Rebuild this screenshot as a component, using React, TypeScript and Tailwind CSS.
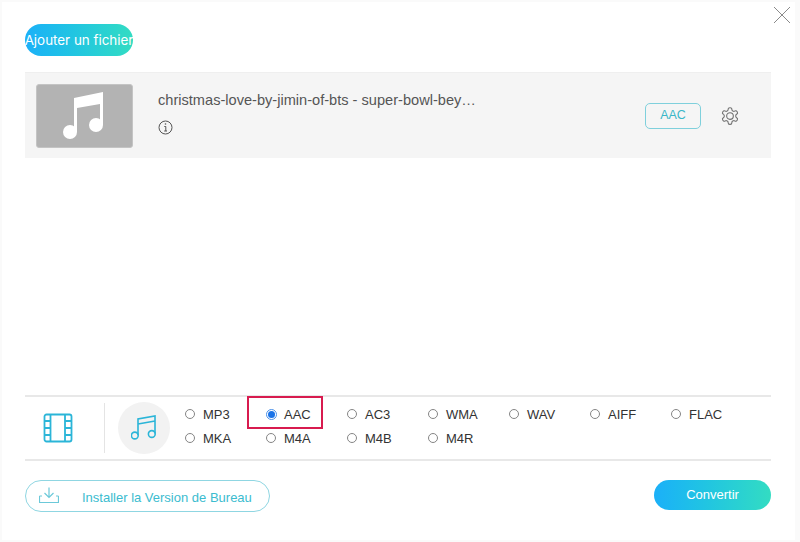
import React from 'react';

const row1 = ['MP3', 'AAC', 'AC3', 'WMA', 'WAV', 'AIFF', 'FLAC'];
const row2 = ['MKA', 'M4A', 'M4B', 'M4R'];

const FormatRadio: React.FC<{ label: string; checked?: boolean }> = ({ label, checked }) => (
  <div className="flex h-6 w-[81px] items-center">
    {checked ? (
      <span className="flex h-[11px] w-[11px] items-center justify-center rounded-full border border-[#4a90e8] bg-white">
        <span className="h-[7px] w-[7px] rounded-full bg-[#1a73e8]" />
      </span>
    ) : (
      <span className="h-[10px] w-[10px] rounded-full border border-[#858585] bg-white" />
    )}
    <span className={`mt-px text-[13px] text-[#333] ${checked ? 'ml-[7px]' : 'ml-[8px]'}`}>{label}</span>
  </div>
);

export default function App() {
  return (
    <div
      className="flex h-[542px] w-[800px] flex-col overflow-hidden border-t-2 border-r-[5px] border-b-2 border-l-2 border-[#fafafa] bg-white pl-[23px] pr-6"
      style={{ fontFamily: '"Liberation Sans", Arial, sans-serif' }}
    >
      <div className="flex h-[70px] items-start justify-between pt-[22px]">
        <button className="flex h-8 w-[108px] items-center justify-center whitespace-nowrap rounded-full bg-gradient-to-r from-[#1cb0f8] to-[#33dcc2] text-[13.400px] text-white" style={{ fontFamily: 'Inter, sans-serif' }}>
          Ajouter un fichier
        </button>
        <button className="-mr-[21px] -mt-[19px] text-[#8a8a8a]">
          <svg width="20" height="20" viewBox="0 0 20 20" fill="none" stroke="currentColor" strokeWidth="1">
            <path d="M2 2 L18 18 M18 2 L2 18" />
          </svg>
        </button>
      </div>

      <div className="flex h-[86px] w-[746px] items-center border-t border-[#efefef] bg-[#f5f5f5] pl-[11px]">
        <div className="flex h-16 w-[97px] items-center justify-center rounded-[3px] border border-[#c4c4c4] bg-[#b3b3b3]">
          <svg className="mr-[3px]" width="41" height="47" viewBox="0 0 41 47" fill="white">
            <path d="M11 6 L40 0 V33 H37 V12 L14 16 V40 H11 Z" />
            <circle cx="7" cy="40" r="7" />
            <circle cx="33" cy="33" r="7" />
          </svg>
        </div>
        <div className="ml-[25px] flex h-16 flex-1 flex-col pt-2">
          <div className="text-[14.600px] leading-4 text-[#555]">christmas-love-by-jimin-of-bts - super-bowl-bey…</div>
          <svg className="mt-[12px]" width="15" height="15" viewBox="0 0 15 15" fill="none" stroke="#555" strokeWidth="1">
            <circle cx="7.500" cy="7.500" r="6.500" />
            <path d="M6.300 6.500 H7.800 V11 M6.200 11 H9" />
            <circle cx="7.500" cy="4" r="0.800" fill="#555" stroke="none" />
          </svg>
        </div>
        <button className="h-[26px] w-[56px] rounded-[5px] border border-[#7fd0dc] text-[12.500px] text-[#3ab7c8]">AAC</button>
        <svg className="ml-[19px] mr-[31px]" width="20" height="20" viewBox="0 0 24 24" fill="none" stroke="#707070" strokeWidth="1.300" strokeLinecap="round" strokeLinejoin="round">
          <path d="M12.220 2h-.44a2 2 0 0 0-2 2v.18a2 2 0 0 1-1 1.730l-.43.25a2 2 0 0 1-2 0l-.15-.08a2 2 0 0 0-2.730.73l-.22.38a2 2 0 0 0 .73 2.730l.15.1a2 2 0 0 1 1 1.720v.51a2 2 0 0 1-1 1.740l-.15.09a2 2 0 0 0-.73 2.730l.22.38a2 2 0 0 0 2.730.73l.15-.08a2 2 0 0 1 2 0l.43.25a2 2 0 0 1 1 1.730V20a2 2 0 0 0 2 2h.44a2 2 0 0 0 2-2v-.18a2 2 0 0 1 1-1.730l.43-.25a2 2 0 0 1 2 0l.15.08a2 2 0 0 0 2.730-.73l.22-.39a2 2 0 0 0-.73-2.730l-.15-.08a2 2 0 0 1-1-1.740v-.5a2 2 0 0 1 1-1.740l.15-.09a2 2 0 0 0 .73-2.730l-.22-.38a2 2 0 0 0-2.730-.73l-.15.08a2 2 0 0 1-2 0l-.43-.25a2 2 0 0 1-1-1.730V4a2 2 0 0 0-2-2z" />
          <circle cx="12" cy="12" r="4" />
        </svg>
      </div>

      <div className="mt-[237px] flex h-[66px] w-[746px] items-center border-y-2 border-[#e8e8e8]">
        <div className="flex w-[79px] items-center pl-[18px]">
          <svg width="30" height="30" viewBox="0 0 30 30" fill="none" stroke="#2bb5d8" strokeWidth="1.800" strokeLinejoin="round">
            <rect x="1.500" y="1.500" width="27" height="27" rx="2" />
            <path d="M7.500 1.500 V28.500 M22 1.500 V28.500 M1.500 8 H7.500 M1.500 15 H7.500 M1.500 22 H7.500 M22 8 H28.500 M22 15 H28.500 M22 22 H28.500" />
          </svg>
        </div>
        <div className="h-[50px] w-px bg-[#e4e4e4]" />
        <div className="ml-[13px] flex h-[52px] w-[52px] items-center justify-center rounded-full bg-[#f2f2f2]">
          <svg width="26" height="28" viewBox="0 0 26 28" fill="none" stroke="#2bb5d8" strokeWidth="1.600">
            <path d="M7 21 V5 L24 2 V19.500 M7 10 L24 7" />
            <circle cx="3.800" cy="21.500" r="3.400" />
            <circle cx="20.800" cy="20" r="3.400" />
          </svg>
        </div>
        <div className="relative ml-[15px] -mt-[4px] flex flex-col">
          <div className="flex">
            {row1.map((f) => (
              <FormatRadio key={f} label={f} checked={f === 'AAC'} />
            ))}
          </div>
          <div className="flex">
            {row2.map((f) => (
              <FormatRadio key={f} label={f} />
            ))}
          </div>
          <div className="absolute -top-[6px] left-[62px] h-[33px] w-[76px] border-2 border-[#d81b4f]" />
        </div>
      </div>

      <div className="mt-[19px] flex w-[746px] items-start justify-between">
        <button className="flex h-8 w-[245px] items-center rounded-full border border-[#8fd6e2] pl-[13px] text-[13px] text-[#3bbccf]">
          <svg className="-mt-[3px]" width="20" height="16" viewBox="0 0 20 16" fill="none" stroke="#6cc9d9" strokeWidth="1.200">
            <path d="M10 0.500 V10 M5.500 6 L10 10.500 L14.500 6 M0.500 9 V15.500 H19.500 V9 M0.500 9 H3 M17 9 H19.500" />
          </svg>
          <span className="ml-[23px] mt-[3px]">Installer la Version de Bureau</span>
        </button>
        <button className="h-[30px] w-[117px] rounded-full bg-gradient-to-r from-[#1cb0f8] to-[#33dcc2] text-[13px] text-white">Convertir</button>
      </div>
    </div>
  );
}
